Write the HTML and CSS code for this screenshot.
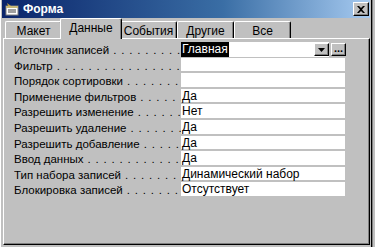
FILE: index.html
```html
<!DOCTYPE html>
<html lang="ru">
<head>
    <meta charset="UTF-8">
    <title>Форма</title>
    <link rel="stylesheet" href="styles.css">
</head>
<body>
    <div class="window">
        <div class="titlebar">
            <svg class="app-icon" width="14" height="13" viewBox="0 0 14 13">
                <rect x="1" y="3" width="12" height="9" fill="#fff" stroke="#808080"/>
                <rect x="1" y="3" width="12" height="2" fill="#c8b878"/>
                <line x1="3" y1="7" x2="11" y2="7" stroke="#404040"/>
                <line x1="3" y1="9" x2="11" y2="9" stroke="#404040"/>
                <path d="M2 0 L6 3 L3 3 Z" fill="#c0a040"/>
            </svg>
            <span class="title">Форма</span>
            <button class="close-btn">
                <svg width="8" height="7" viewBox="0 0 8 7">
                    <path d="M0 0 L2 0 L4 2 L6 0 L8 0 L5 3.5 L8 7 L6 7 L4 5 L2 7 L0 7 L3 3.5 Z" fill="#000"/>
                </svg>
            </button>
        </div>

        <div class="tabs">
            <div class="tab">Макет</div>
            <div class="tab active">Данные</div>
            <div class="tab">События</div>
            <div class="tab">Другие</div>
            <div class="tab">Все</div>
        </div>

        <div class="panel">
            <div class="props">
                <div class="row">
                    <div class="label">Источник записей</div>
                    <div class="value combo"><span class="selected">Главная</span>
                        <span class="drop-btn"><svg width="7" height="4" viewBox="0 0 7 4"><path d="M0 0 L7 0 L3.5 4 Z" fill="#000"/></svg></span>
                    </div>
                    <span class="build-btn">...</span>
                </div>
                <div class="row">
                    <div class="label">Фильтр</div>
                    <div class="value"></div>
                </div>
                <div class="row">
                    <div class="label">Порядок сортировки</div>
                    <div class="value"></div>
                </div>
                <div class="row">
                    <div class="label">Применение фильтров</div>
                    <div class="value">Да</div>
                </div>
                <div class="row">
                    <div class="label">Разрешить изменение</div>
                    <div class="value">Нет</div>
                </div>
                <div class="row">
                    <div class="label">Разрешить удаление</div>
                    <div class="value">Да</div>
                </div>
                <div class="row">
                    <div class="label">Разрешить добавление</div>
                    <div class="value">Да</div>
                </div>
                <div class="row">
                    <div class="label">Ввод данных</div>
                    <div class="value">Да</div>
                </div>
                <div class="row">
                    <div class="label">Тип набора записей</div>
                    <div class="value">Динамический набор</div>
                </div>
                <div class="row">
                    <div class="label">Блокировка записей</div>
                    <div class="value">Отсутствует</div>
                </div>
            </div>
        </div>
    </div>
    <div class="behind"></div>
</body>
</html>
```

FILE: styles.css
```css
body {
    margin: 0;
    padding: 0;
    display: flex;
    width: 375px;
    height: 247px;
    overflow: hidden;
    background-color: #c0c0c0;
    font-family: "Liberation Sans", Arial, sans-serif;
    font-size: 11px;
}

.window {
    width: 372px;
    height: 247px;
    box-sizing: border-box;
    background-color: #c0c0c0;
    border-left: 1px solid #ffffff;
    border-right: 1px solid #000000;
    display: flex;
    flex-direction: column;
}

.behind {
    flex: 1;
    background-color: #c0c0c0;
    border-left: 1px solid #808080;
}

.titlebar {
    height: 18px;
    margin: 0 1px 0 1px;
    background: linear-gradient(to right, #0a246a, #3a6ea5 60%, #a6caf0);
    display: flex;
    align-items: center;
    padding: 0 1px 0 3px;
}

.app-icon {
    margin-right: 4px;
}

.title {
    color: #ffffff;
    font-weight: bold;
    font-size: 12px;
    flex: 1;
}

.close-btn {
    width: 16px;
    height: 14px;
    padding: 0;
    background-color: #c0c0c0;
    border: 1px solid;
    border-color: #ffffff #000000 #000000 #ffffff;
    box-shadow: inset -1px -1px 0 #808080;
    display: flex;
    align-items: center;
    justify-content: center;
}

.tabs {
    display: flex;
    height: 20px;
    padding: 0 0 0 4px;
    align-items: flex-end;
}

.tab {
    height: 17px;
    box-sizing: border-box;
    padding: 2px 0 0;
    width: 57px;
    text-align: center;
    font-size: 12px;
    color: #000000;
    border-top: 1px solid #ffffff;
    border-left: 1px solid #ffffff;
    border-right: 1px solid #000000;
    box-shadow: inset -1px 0 0 #808080;
    border-radius: 2px 2px 0 0;
}

.tab.active {
    width: 62px;
    margin: 0 -2px -1px -2px;
    padding-top: 2px;
    position: relative;
    z-index: 1;
    background-color: #c0c0c0;
    height: 21px;
}

.panel {
    flex: 1;
    margin: 0 1px 2px 2px;
    border-top: 1px solid #ffffff;
    border-left: 1px solid #ffffff;
    border-right: 1px solid #000000;
    border-bottom: 1px solid #000000;
    box-shadow: inset -1px -1px 0 #808080;
    padding: 1px 0 0 0;
}

.props {
    padding: 2px 0 0 10px;
    display: flex;
    flex-direction: column;
}

.row {
    display: flex;
    height: 15.6px;
    align-items: stretch;
}

.label {
    width: 167px;
    overflow: hidden;
    white-space: nowrap;
    font-size: 11.5px;
    line-height: 14px;
    padding-top: 1px;
    color: #000000;
}

.label::after {
    content: " . . . . . . . . . . . . . . . . . . . . . . . . . . . . .";
    letter-spacing: 0.8px;
}

.value {
    width: 163px;
    background-color: #ffffff;
    margin-bottom: 2px;
    font-size: 12px;
    line-height: 14px;
    padding-left: 1px;
    white-space: nowrap;
}

.combo {
    width: 147px;
    display: flex;
    justify-content: space-between;
    margin-bottom: 1px;
}

.selected {
    background-color: #000000;
    color: #ffffff;
    padding: 0 1px;
    margin-left: -1px;
}

.drop-btn,
.build-btn {
    width: 15px;
    height: 13px;
    box-sizing: border-box;
    background-color: #c0c0c0;
    border: 1px solid;
    border-color: #ffffff #000000 #000000 #ffffff;
    box-shadow: inset -1px -1px 0 #808080;
    display: flex;
    align-items: center;
    justify-content: center;
    margin-top: 1px;
}

.build-btn {
    margin-left: 2px;
    font-size: 11px;
    font-weight: bold;
    line-height: 8px;
    align-items: flex-start;
}
```
